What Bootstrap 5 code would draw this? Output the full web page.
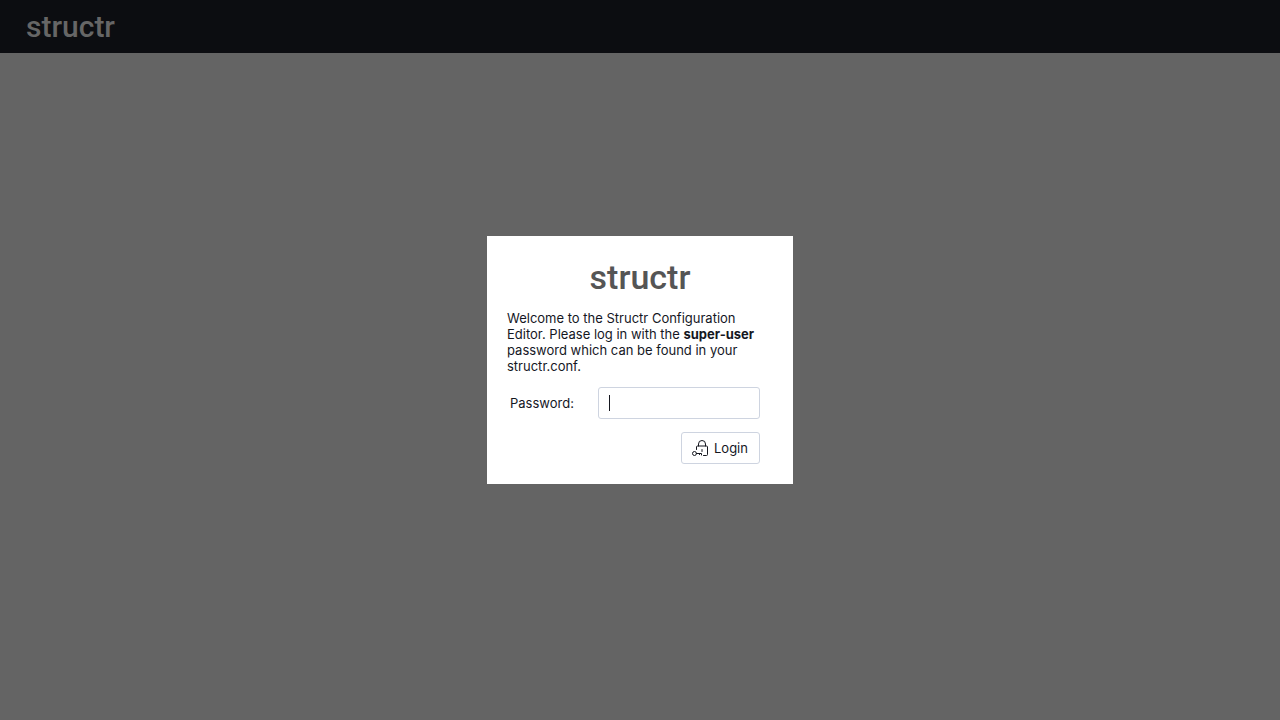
<!DOCTYPE html>
<html lang="en">
<head>
<meta charset="utf-8">
<meta name="viewport" content="width=device-width, initial-scale=1">
<title>Structr Configuration Editor</title>
<link href="https://cdn.jsdelivr.net/npm/bootstrap@5.3.0/dist/css/bootstrap.min.css" rel="stylesheet">
<style>
  body { background: #646464; color: #15171f; font-family: Inter, sans-serif; font-size: 13px; line-height: 16px; }
  .top-bar { background: #0c0d11; height: 53px; padding: 0 26px; }
  .wordmark { font-family: Roboto, sans-serif; font-weight: 500; line-height: 34px; }
  .wordmark-bar { font-size: 30px; color: #666; }
  .wordmark-box { font-size: 34px; color: #555; }
  .login-layer { pointer-events: none; }
  .login-box { width: 306px; padding: 24px 20px 20px; pointer-events: auto; }
  .login-fields { padding: 13px 13px 0 3px; gap: 13px; }
  .field-control { width: 162px; height: 32px; border: 1px solid #ced4e0; border-radius: 3px; font-size: 13px; line-height: 16px; padding: 0 10px; color: #15171f; }
  .field-control:focus { border-color: #ced4e0; box-shadow: none; }
  .with-caret, .with-caret:focus { caret-color: transparent; background: linear-gradient(#15171f, #15171f) 10px center / 1px 16px no-repeat #fff; }
  .login-button { min-width: 79px; height: 32px; border: 1px solid #ced4e0; border-radius: 3px; background: #fff; color: #15171f; font-size: 13px; line-height: 16px; padding: 0 10px; gap: 6px; }
</style>
</head>
<body>
<header class="top-bar d-flex align-items-center"><span class="wordmark wordmark-bar">structr</span></header>
<main class="login-layer position-fixed top-0 start-0 w-100 h-100 d-flex align-items-center justify-content-center">
  <form class="login-box bg-white">
    <div class="wordmark wordmark-box text-center">structr</div>
    <p class="mt-3 mb-0">Welcome to the Structr Configuration Editor. Please log in with the <strong>super-user</strong> password which can be found in your structr.conf.</p>
    <div class="login-fields d-flex flex-column">
      <div class="d-flex align-items-center justify-content-between">
        <label for="password">Password:</label>
        <input id="password" type="password" class="form-control field-control with-caret" autofocus>
      </div>
      <div class="d-flex justify-content-end">
        <button type="submit" class="btn login-button d-flex align-items-center">
          <svg width="16" height="16" viewBox="0 0 16 16" fill="none" stroke="currentColor" stroke-linecap="round" stroke-linejoin="round" aria-hidden="true">
            <path d="M6.500 6V4a3.500 3.500 0 0 1 7 0v2M4.500 9.500V7a1 1 0 0 1 1-1h9a1 1 0 0 1 1 1v7.500a1 1 0 0 1-1 1h-3M10 9.500v2"/>
            <circle cx="2.500" cy="13.500" r="2"/>
            <path d="M4.500 13.500h5v1.500M7.500 13.500v1"/>
          </svg>
          Login
        </button>
      </div>
    </div>
  </form>
</main>
<script src="https://cdn.jsdelivr.net/npm/bootstrap@5.3.0/dist/js/bootstrap.bundle.min.js"></script>
</body>
</html>
